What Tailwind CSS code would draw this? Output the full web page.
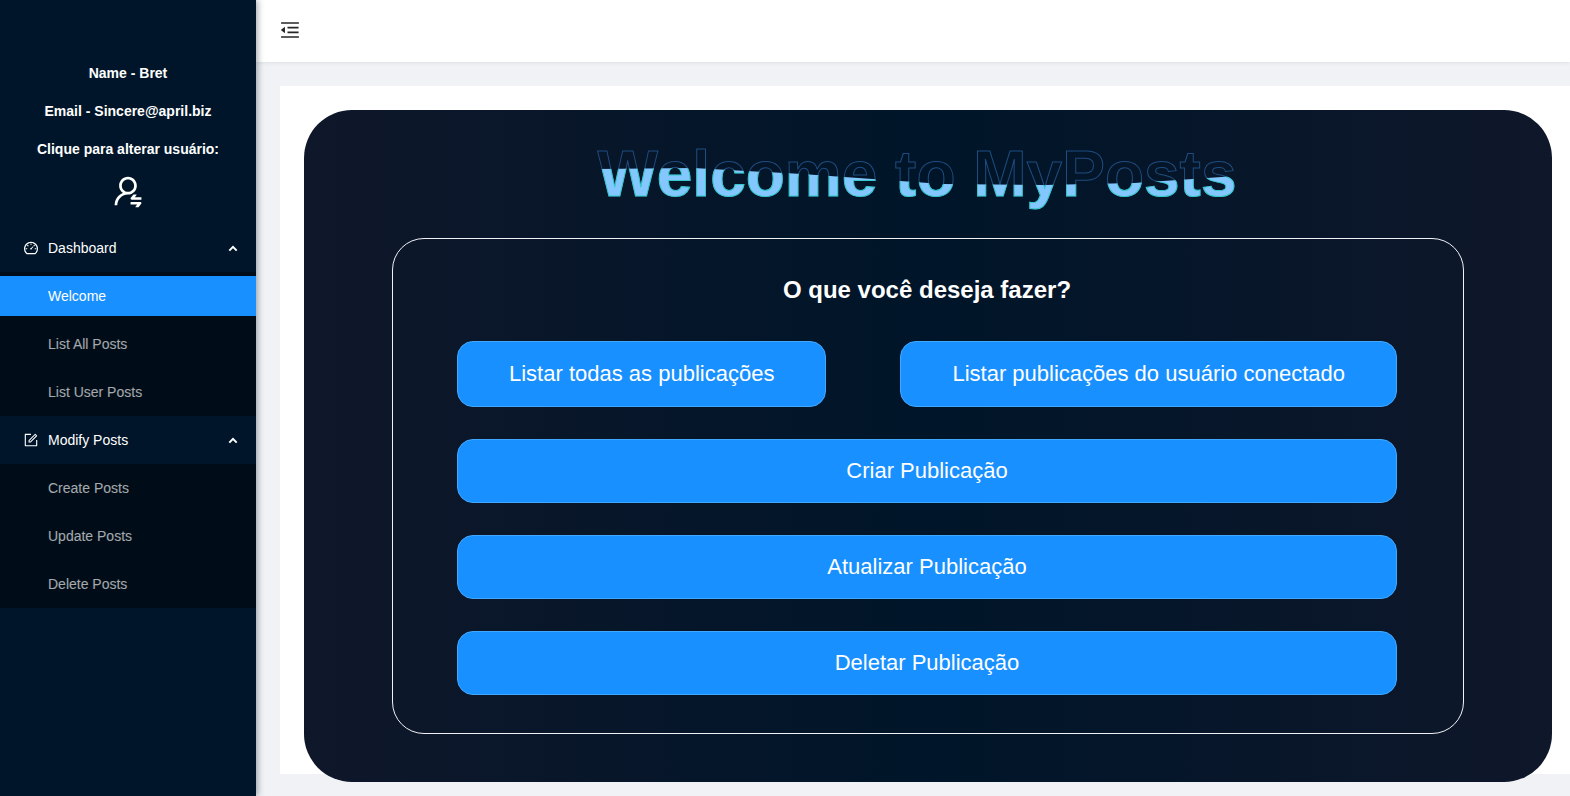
<!DOCTYPE html>
<html lang="pt-BR">
<head>
<meta charset="utf-8">
<meta name="viewport" content="width=device-width, initial-scale=1">
<title>MyPosts</title>
<script src="https://cdn.jsdelivr.net/npm/@tailwindcss/browser@4"></script>
</head>
<body class="flex min-h-screen overflow-x-hidden bg-[#f0f2f5] font-['Liberation_Sans',Arial,sans-serif] text-sm leading-[22px]">
<aside class="z-10 w-64 shrink-0 bg-[#001529] text-white shadow-[2px_0_6px_rgba(0,21,41,0.35)]">
  <div class="flex flex-col items-center gap-4 pt-[62px] pb-4 font-bold">
    <p>Name - Bret</p>
    <p>Email - Sincere@april.biz</p>
    <p>Clique para alterar usuário:</p>
    <button type="button" aria-label="Alterar usuário" class="cursor-pointer">
      <svg class="size-8" viewBox="64 64 896 896" fill="currentColor"><path d="M759 335c0-137-111-248-248-248S263 198 263 335c0 82.800 40.600 156.200 103 201.200-.4.2-.7.3-.9.4-44.700 18.900-84.800 46-119.300 80.600a373.420 373.420 0 00-80.400 119.500A373.600 373.600 0 00136 874.800a8 8 0 008 8.200h59.900c4.300 0 7.900-3.500 8-7.800 2-77.200 32.900-149.500 87.600-204.300C356 614.200 431 583 511 583c137 0 248-111 248-248zM511 507c-95 0-172-77-172-172s77-172 172-172 172 77 172 172-77 172-172 172zm105 221h264c4.400 0 8-3.600 8-8v-56c0-4.400-3.600-8-8-8H703.500l47.200-60.100a8.100 8.100 0 001.700-4.900c0-4.400-3.600-8-8-8h-72.600c-4.900 0-9.500 2.300-12.600 6.100l-68.500 87.100c-4.400 5.600-6.800 12.600-6.800 19.800.1 17.700 14.400 32 32.100 32zm240 64H592c-4.400 0-8 3.600-8 8v56c0 4.400 3.600 8 8 8h176.500l-47.200 60.100a8.100 8.100 0 00-1.700 4.900c0 4.400 3.600 8 8 8h72.600c4.900 0 9.500-2.300 12.600-6.100l68.500-87.100c4.400-5.600 6.800-12.600 6.800-19.800-.1-17.700-14.400-32-32.100-32z"/></svg>
    </button>
  </div>
  <nav>
    <button type="button" aria-expanded="true" class="flex h-12 w-full items-center gap-2.5 pr-[18px] pl-6 text-left">
      <svg class="size-3.5" viewBox="64 64 896 896" fill="currentColor"><path d="M924.800 385.600a446.700 446.700 0 00-96-142.400 446.700 446.700 0 00-142.400-96C631.100 123.800 572.500 112 512 112s-119.100 11.800-174.400 35.200a446.700 446.700 0 00-142.400 96 446.700 446.700 0 00-96 142.400C75.800 440.900 64 499.500 64 560c0 132.700 58.300 257.700 159.900 343.100l1.700 1.400c5.800 4.800 13.100 7.500 20.600 7.500h531.700c7.500 0 14.800-2.700 20.600-7.500l1.700-1.400C901.700 817.700 960 692.700 960 560c0-60.500-11.900-119.100-35.200-174.400zM761.400 836H262.600A371.120 371.120 0 01140 560c0-99.400 38.700-192.800 109-263 70.300-70.300 163.700-109 263-109 99.400 0 192.800 38.700 263 109 70.300 70.300 109 163.700 109 263 0 105.600-44.500 205.500-122.600 276zM623.500 421.500a8.030 8.030 0 00-11.300 0L527.700 506c-18.700-5-39.400-.2-54.100 14.500a55.950 55.950 0 000 79.200 55.950 55.950 0 0079.200 0 55.870 55.870 0 0014.500-54.100l84.500-84.500c3.100-3.100 3.100-8.200 0-11.300l-28.300-28.300zM490 320h44c4.400 0 8-3.600 8-8v-80c0-4.400-3.600-8-8-8h-44c-4.400 0-8 3.600-8 8v80c0 4.400 3.600 8 8 8zm260 218v44c0 4.400 3.600 8 8 8h80c4.400 0 8-3.600 8-8v-44c0-4.400-3.600-8-8-8h-80c-4.400 0-8 3.600-8 8zm12.700-197.200l-31.100-31.100a8.030 8.030 0 00-11.300 0l-56.600 56.600a8.030 8.030 0 000 11.300l31.100 31.100c3.100 3.100 8.200 3.100 11.300 0l56.600-56.600c3.100-3.100 3.100-8.200 0-11.300zm-458.600-31.100a8.030 8.030 0 00-11.300 0l-31.100 31.100a8.030 8.030 0 000 11.300l56.600 56.600c3.100 3.100 8.200 3.100 11.300 0l31.100-31.100c3.100-3.100 3.100-8.200 0-11.300l-56.600-56.600zM262 530h-80c-4.400 0-8 3.600-8 8v44c0 4.400 3.600 8 8 8h80c4.400 0 8-3.600 8-8v-44c0-4.400-3.600-8-8-8z"/></svg>
      <span class="flex-1">Dashboard</span>
      <svg class="h-2 w-2.5" viewBox="0 0 10 8" fill="none" stroke="currentColor" stroke-width="2"><path d="M1.300 6.600 5 2.900l3.700 3.700"/></svg>
    </button>
    <ul class="flex flex-col gap-2 bg-[#000c17] py-1 text-white/65">
      <li><a href="#welcome" aria-current="page" class="flex h-10 items-center bg-[#1890ff] pl-12 text-white">Welcome</a></li>
      <li><a href="#list-all" class="flex h-10 items-center pl-12">List All Posts</a></li>
      <li><a href="#list-user" class="flex h-10 items-center pl-12">List User Posts</a></li>
    </ul>
    <button type="button" aria-expanded="true" class="flex h-12 w-full items-center gap-2.5 pr-[18px] pl-6 text-left">
      <svg class="size-3.5" viewBox="64 64 896 896" fill="currentColor"><path d="M904 512h-56c-4.400 0-8 3.600-8 8v320H184V184h320c4.400 0 8-3.600 8-8v-56c0-4.400-3.600-8-8-8H144c-17.700 0-32 14.300-32 32v736c0 17.700 14.300 32 32 32h736c17.700 0 32-14.300 32-32V520c0-4.400-3.600-8-8-8z"/><path d="M355.900 534.900L354 653.800c-.1 8.900 7.100 16.200 16 16.200h.4l118-2.900c2-.1 4-.9 5.400-2.300l415.900-415c3.100-3.100 3.100-8.200 0-11.300L785.400 114.300c-1.600-1.600-3.600-2.300-5.700-2.300s-4.100.8-5.700 2.300l-415.800 415a8.300 8.300 0 00-2.300 5.600zm63.500 23.600L779.700 199l45.200 45.100-360.500 359.700-45.700 1.100.7-46.400z"/></svg>
      <span class="flex-1">Modify Posts</span>
      <svg class="h-2 w-2.5" viewBox="0 0 10 8" fill="none" stroke="currentColor" stroke-width="2"><path d="M1.300 6.600 5 2.900l3.700 3.700"/></svg>
    </button>
    <ul class="flex flex-col gap-2 bg-[#000c17] py-1 text-white/65">
      <li><a href="#create" class="flex h-10 items-center pl-12">Create Posts</a></li>
      <li><a href="#update" class="flex h-10 items-center pl-12">Update Posts</a></li>
      <li><a href="#delete" class="flex h-10 items-center pl-12">Delete Posts</a></li>
    </ul>
  </nav>
</aside>
<div class="flex min-w-0 flex-1 flex-col">
  <header class="flex items-center bg-white px-6 pt-5 pb-[22px] shadow-[0_1px_4px_rgba(0,21,41,0.08)]">
    <button type="button" aria-label="Recolher menu" class="cursor-pointer text-black/85">
      <svg class="size-5" viewBox="64 64 896 896" fill="currentColor"><path d="M408 442h480c4.400 0 8-3.600 8-8v-56c0-4.400-3.600-8-8-8H408c-4.400 0-8 3.600-8 8v56c0 4.400 3.600 8 8 8zm-8 204c0 4.400 3.600 8 8 8h480c4.400 0 8-3.600 8-8v-56c0-4.400-3.600-8-8-8H408c-4.400 0-8 3.600-8 8v56zm504-486H120c-4.400 0-8 3.600-8 8v56c0 4.400 3.600 8 8 8h784c4.400 0 8-3.600 8-8v-56c0-4.400-3.600-8-8-8zm0 632H120c-4.400 0-8 3.600-8 8v56c0 4.400 3.600 8 8 8h784c4.400 0 8-3.600 8-8v-56c0-4.400-3.600-8-8-8zM115.400 518.900L271.700 642c5.800 4.600 14.400.5 14.400-6.900V388.900c0-7.400-8.500-11.500-14.400-6.900L115.400 505.100a8.740 8.740 0 000 13.800z"/></svg>
    </button>
  </header>
  <main class="mt-6 mb-[22px] ml-6 flex-1 bg-white pt-6 pr-[18px] pl-6">
    <section class="-mb-2 rounded-[48px] bg-[linear-gradient(90deg,#0f172a,#001529,#0f172a)] px-[88px] pt-3.5 pb-12">
      <!-- Outlined title with a wave-shaped fill laid over it -->
      <h1 class="mr-[22px] flex justify-center text-[64px] leading-[100px] font-bold whitespace-nowrap">
        <span class="relative text-transparent [-webkit-text-stroke:1px_#1f4d80]">Welcome to MyPosts<span aria-hidden="true" class="absolute inset-0 text-[#84c7ff] [-webkit-text-stroke:1px_#35c8c8] [clip-path:polygon(0%_45%,15%_44%,32%_50%,54%_60%,70%_61%,84%_59%,100%_52%,100%_100%,0%_100%)]">Welcome to MyPosts</span></span>
      </h1>
      <div class="mt-3.5 flex flex-col gap-8 rounded-[32px] border border-[#f0f2f5] pt-8 pr-[66px] pb-[38px] pl-16 text-[22px] leading-[34px] text-white">
        <h2 class="text-center text-2xl leading-[38px] font-bold">O que você deseja fazer?</h2>
        <div class="flex flex-wrap justify-between gap-4">
          <button type="button" class="cursor-pointer rounded-2xl border border-[#40a9ff] bg-[#1890ff] px-[51px] py-[15px]">Listar todas as publicações</button>
          <button type="button" class="cursor-pointer rounded-2xl border border-[#40a9ff] bg-[#1890ff] px-[51px] py-[15px]">Listar publicações do usuário conectado</button>
        </div>
        <button type="button" class="h-16 cursor-pointer rounded-2xl border border-[#40a9ff] bg-[#1890ff] px-12">Criar Publicação</button>
        <button type="button" class="h-16 cursor-pointer rounded-2xl border border-[#40a9ff] bg-[#1890ff] px-12">Atualizar Publicação</button>
        <button type="button" class="h-16 cursor-pointer rounded-2xl border border-[#40a9ff] bg-[#1890ff] px-12">Deletar Publicação</button>
      </div>
    </section>
  </main>
</div>
</body>
</html>
